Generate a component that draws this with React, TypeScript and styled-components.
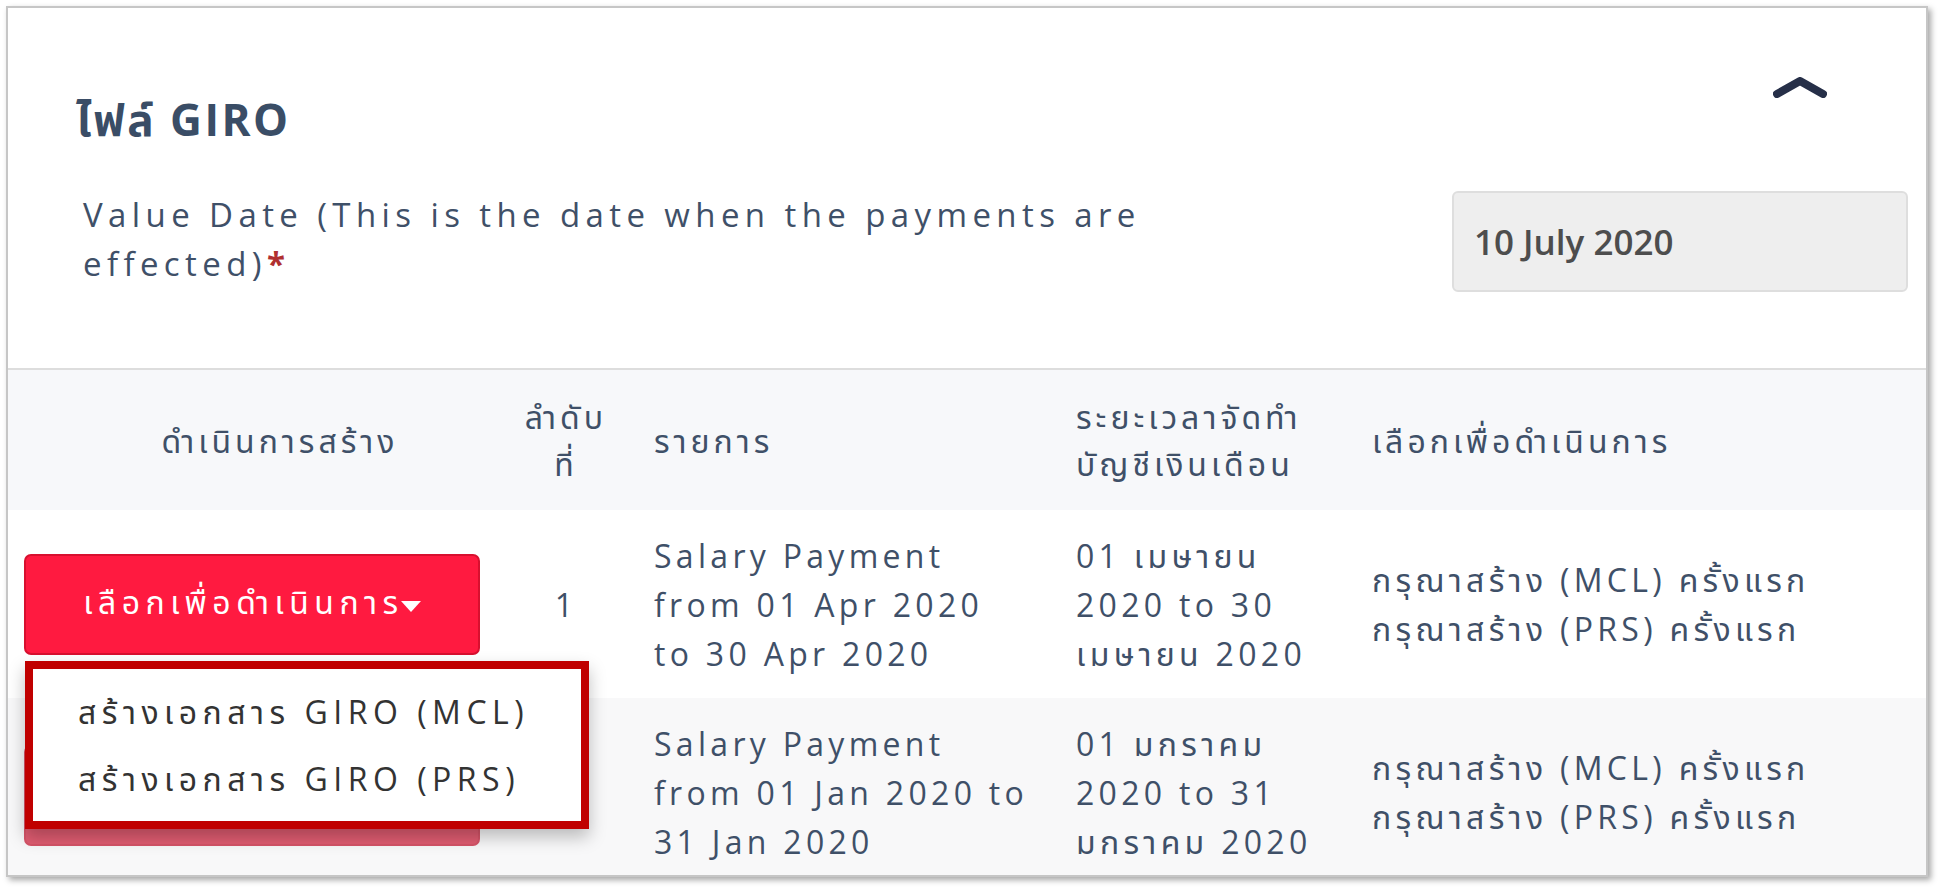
import styled, { createGlobalStyle } from 'styled-components';

const GlobalStyle = createGlobalStyle`
  html, body {
    margin: 0;
    padding: 0;
    background: #ffffff;
  }
  body {
    font-family: 'Open Sans', 'Noto Sans Thai', 'Noto Sans', sans-serif;
    color: #3f5068;
  }
  * {
    box-sizing: border-box;
  }
`;

const Page = styled.div`
  padding: 6px 0 0 6px;
  width: 1940px;
  height: 892px;
`;

const Card = styled.div`
  width: 1922px;
  height: 871px;
  border: 2px solid #c6c6c6;
  box-shadow: 3px 3px 6px rgba(0, 0, 0, 0.35);
  background: #ffffff;
  overflow: hidden;
  display: flex;
  flex-direction: column;
`;

const TopSection = styled.div`
  padding: 69px 18px 76px 68px;
  border-bottom: 2px solid #dddddd;
`;

const TitleRow = styled.div`
  display: flex;
  justify-content: space-between;
  align-items: flex-start;
`;

const Title = styled.h2`
  margin: 16px 0 0 0;
  font-size: 44px;
  line-height: 52px;
  font-weight: 700;
  letter-spacing: 2.5px;
  color: #3a4d66;
`;

const CollapseButton = styled.button`
  border: none;
  background: none;
  padding: 0;
  margin-right: 81px;
  width: 54px;
  height: 21px;
  cursor: pointer;
  display: flex;
`;

const FieldRow = styled.div`
  display: flex;
  justify-content: space-between;
  align-items: flex-start;
  margin-top: 45px;
`;

const FieldLabel = styled.label`
  font-size: 33px;
  line-height: 49px;
  letter-spacing: 5.4px;
  color: #3f5068;
  padding-left: 7px;
`;

const Required = styled.span`
  color: #b03030;
  font-weight: 700;
  letter-spacing: 0;
`;

const DateInput = styled.div`
  width: 456px;
  height: 101px;
  margin-top: 1px;
  background: #eeeeee;
  border: 2px solid #dedede;
  border-radius: 6px;
  display: flex;
  align-items: center;
  padding-left: 20px;
  font-size: 35px;
  font-weight: 600;
  color: #4d4d4d;
`;

const Row = styled.div<{ $bg: string; $height: number }>`
  display: grid;
  grid-template-columns: 500px 116px 436px 290px 1fr;
  align-items: center;
  background: ${p => p.$bg};
  height: ${p => p.$height}px;
  flex-shrink: 0;
`;

const HeadCell = styled.div<{ $align?: string; $pl?: number }>`
  font-size: 32px;
  line-height: 47px;
  letter-spacing: 4px;
  color: #3f5068;
  white-space: nowrap;
  text-align: ${p => p.$align || 'left'};
  padding-left: ${p => p.$pl ?? 0}px;
`;

const Cell = styled.div<{ $align?: string; $pl?: number }>`
  font-size: 32px;
  line-height: 49px;
  letter-spacing: 4.3px;
  color: #3f5068;
  white-space: nowrap;
  text-align: ${p => p.$align || 'left'};
  padding-left: ${p => p.$pl ?? 0}px;
`;

const ActionWrap = styled.div`
  position: relative;
  width: 456px;
`;

const ActionButton = styled.button<{ $muted?: boolean }>`
  width: 456px;
  height: 101px;
  margin-top: ${p => (p.$muted ? '6px' : '0')};
  border-radius: 7px;
  border: 2px solid ${p => (p.$muted ? '#d65468' : '#d8102f')};
  background: ${p => (p.$muted ? '#e05c71' : '#ff1a40')};
  color: #ffffff;
  font-family: inherit;
  font-size: 32px;
  letter-spacing: 5.5px;
  display: flex;
  align-items: center;
  justify-content: center;
  padding: 0;
  cursor: pointer;
`;

const Caret = styled.span`
  display: inline-block;
  width: 0;
  height: 0;
  border-left: 10px solid transparent;
  border-right: 10px solid transparent;
  border-top: 11px solid #ffffff;
  margin-left: -3px;
  margin-top: 4px;
`;

const Menu = styled.ul`
  position: absolute;
  top: calc(100% + 6px);
  left: 1px;
  width: 564px;
  margin: 0;
  padding: 9px 0;
  list-style: none;
  background: #ffffff;
  border: 8px solid #c00000;
  box-shadow: 0 8px 16px rgba(0, 0, 0, 0.25);
  z-index: 10;
`;

const MenuItem = styled.li`
  height: 67px;
  display: flex;
  align-items: center;
  padding-left: 45px;
  font-size: 32px;
  letter-spacing: 5.5px;
  white-space: nowrap;
  color: #333333;
  cursor: pointer;
`;

const Lines = ({ lines }: { lines: string[] }) => (
  <>
    {lines.map((l, i) => (
      <div key={i}>{l}</div>
    ))}
  </>
);

const rows = [
  {
    no: '1',
    item: ['Salary Payment', 'from 01 Apr 2020', 'to 30 Apr 2020'],
    period: ['01 เมษายน', '2020 to 30', 'เมษายน 2020'],
    status: ['กรุณาสร้าง (MCL) ครั้งแรก', 'กรุณาสร้าง (PRS) ครั้งแรก'],
  },
  {
    no: '2',
    item: ['Salary Payment', 'from 01 Jan 2020 to', '31 Jan 2020'],
    period: ['01 มกราคม', '2020 to 31', 'มกราคม 2020'],
    status: ['กรุณาสร้าง (MCL) ครั้งแรก', 'กรุณาสร้าง (PRS) ครั้งแรก'],
  },
];

const App = () => {
  return (
    <Page>
      <GlobalStyle />
      <Card>
        <TopSection>
          <TitleRow>
            <Title>ไฟล์ GIRO</Title>
            <CollapseButton aria-label="collapse">
              <svg width="54" height="21" viewBox="0 0 54 21">
                <path
                  d="M4 17 L27 4 L50 17"
                  fill="none"
                  stroke="#262f48"
                  strokeWidth="8"
                  strokeLinecap="round"
                  strokeLinejoin="round"
                />
              </svg>
            </CollapseButton>
          </TitleRow>
          <FieldRow>
            <FieldLabel>
              Value Date (This is the date when the payments are
              <br />
              effected)<Required>*</Required>
            </FieldLabel>
            <DateInput>10 July 2020</DateInput>
          </FieldRow>
        </TopSection>

        <Row $bg="#f7f8fa" $height={140}>
          <HeadCell $align="center" $pl={44}>ดำเนินการสร้าง</HeadCell>
          <HeadCell $align="center">
            ลำดับ
            <br />
            ที่
          </HeadCell>
          <HeadCell $pl={30}>รายการ</HeadCell>
          <HeadCell $pl={16}>
            ระยะเวลาจัดทำ
            <br />
            บัญชีเงินเดือน
          </HeadCell>
          <HeadCell $pl={22}>เลือกเพื่อดำเนินการ</HeadCell>
        </Row>

        {rows.map((r, idx) => (
          <Row key={r.no} $bg={idx === 0 ? '#ffffff' : '#f8f8f9'} $height={188}>
            <Cell $pl={16}>
              <ActionWrap>
                <ActionButton $muted={idx > 0}>
                  เลือกเพื่อดำเนินการ<Caret />
                </ActionButton>
                {idx === 0 && (
                  <Menu>
                    <MenuItem>สร้างเอกสาร GIRO (MCL)</MenuItem>
                    <MenuItem>สร้างเอกสาร GIRO (PRS)</MenuItem>
                  </Menu>
                )}
              </ActionWrap>
            </Cell>
            <Cell $align="center">{idx === 0 ? r.no : ''}</Cell>
            <Cell $pl={30}>
              <Lines lines={r.item} />
            </Cell>
            <Cell $pl={16}>
              <Lines lines={r.period} />
            </Cell>
            <Cell $pl={22}>
              <Lines lines={r.status} />
            </Cell>
          </Row>
        ))}
      </Card>
    </Page>
  );
};

export default App;
